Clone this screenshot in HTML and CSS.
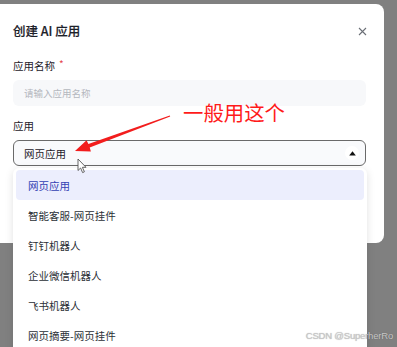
FILE: index.html
```html
<!DOCTYPE html>
<html lang="zh">
<head>
<meta charset="utf-8">
<link rel="stylesheet" href="styles.css">
</head>
<body>
<div class="stage">
  <div class="modal">
    <div class="modal-header">
      <span class="title">创建 AI 应用</span>
      <span class="close">
        <svg width="9" height="9" viewBox="0 0 9 9"><path d="M1 1L8 8M8 1L1 8" stroke="#6b6f76" stroke-width="1.1" fill="none"/></svg>
      </span>
    </div>
    <div class="form">
      <div class="field">
        <div class="label">应用名称<span class="req">*</span></div>
        <div class="input">请输入应用名称</div>
      </div>
      <div class="field">
        <div class="label">应用</div>
        <div class="select">
          <span>网页应用</span>
          <span class="caret"><svg width="7" height="5" viewBox="0 0 7 5"><path d="M3.5 0.3L6.8 4.5H0.2Z" fill="#111"/></svg></span>
        </div>
      </div>
    </div>
  </div>

  <ul class="dropdown">
    <li class="option active">网页应用</li>
    <li class="option">智能客服-网页挂件</li>
    <li class="option">钉钉机器人</li>
    <li class="option">企业微信机器人</li>
    <li class="option">飞书机器人</li>
    <li class="option">网页摘要-网页挂件</li>
  </ul>

  <div class="note">一般用这个</div>
  <svg class="arrow" width="397" height="347" viewBox="0 0 397 347">
    <polygon points="75,151 86.6,140.3 88.4,144.1 169.8,115.4 170.2,116.6 89.7,147.4 90.9,151.6" fill="#f21d1d"/>
  </svg>
  <svg class="cursor" width="12" height="16" viewBox="0 0 12 16">
    <path d="M1 1L1 12.5L3.6 10L5.6 14.6L7.4 13.8L5.4 9.3L9 9.3Z" fill="#fff" stroke="#555" stroke-width="0.9" stroke-linejoin="round"/>
  </svg>
  <div class="watermark">CSDN @SuperherRo</div>
</div>
</body>
</html>
```
FILE: styles.css
```css
html, body {
  margin: 0;
  padding: 0;
}
body {
  background: #808080;
  width: 397px;
  height: 347px;
  overflow: hidden;
  font-family: "Noto Sans CJK SC", "Noto Sans", sans-serif;
}
.stage {
  position: relative;
  width: 397px;
  height: 347px;
  padding-top: 4px;
  box-sizing: border-box;
}
.modal {
  width: 384px;
  height: 239px;
  background: #fff;
  border-radius: 0 8px 8px 0;
  box-sizing: border-box;
}
.modal-header {
  height: 54px;
  display: flex;
  align-items: center;
  justify-content: space-between;
  padding: 0 14px 0 13px;
}
.title {
  font-size: 12.5px;
  font-weight: 500;
  color: #1d2129;
  line-height: 16px;
  -webkit-text-stroke: 0.15px #1d2129;
}
.close {
  width: 16px;
  height: 16px;
  display: flex;
  align-items: center;
  justify-content: center;
}
.form {
  padding: 0 18px 0 13px;
}
.field {
  margin-bottom: 12px;
}
.label {
  font-size: 10.5px;
  line-height: 16px;
  color: #1d2129;
  margin-bottom: 6px;
}
.req {
  color: #e5484d;
  margin-left: 4px;
  font-size: 10px;
  position: relative;
  top: -2px;
}
.input {
  height: 26px;
  background: #f7f8fa;
  border-radius: 6px;
  display: flex;
  align-items: center;
  padding-left: 11px;
  font-size: 9.5px;
  color: #b4b7be;
}
.select {
  height: 26px;
  box-sizing: border-box;
  border: 1px solid #6a6a6a;
  border-radius: 6px;
  background: #f9fafc;
  display: flex;
  align-items: center;
  justify-content: space-between;
  padding: 0 6px 0 10px;
  font-size: 10.5px;
  color: #1d2129;
}
.caret {
  width: 14px;
  height: 14px;
  border-radius: 50%;
  background: #fff;
  display: flex;
  align-items: center;
  justify-content: center;
}
.dropdown {
  position: absolute;
  left: 13px;
  top: 168px;
  width: 354px;
  height: 190px;
  margin: 0;
  padding: 2px 3px 0;
  box-sizing: border-box;
  list-style: none;
  background: #fff;
  border-radius: 6px;
  box-shadow: 0 2px 8px rgba(0, 0, 0, 0.12);
}
.option {
  height: 30px;
  display: flex;
  align-items: center;
  padding-left: 12px;
  font-size: 10.5px;
  color: #2b2f36;
  border-radius: 4px;
}
.option.active {
  background: #eceefd;
  color: #3341b3;
}
.note {
  position: absolute;
  left: 183px;
  top: 98px;
  font-size: 20.4px;
  line-height: 28px;
  color: #ff1a1a;
  font-weight: 400;
}
.arrow {
  position: absolute;
  left: 0;
  top: 0;
}
.cursor {
  position: absolute;
  left: 77px;
  top: 158px;
}
.watermark {
  position: absolute;
  right: 4px;
  top: 329px;
  white-space: nowrap;
  font-family: "Liberation Sans", Arial, sans-serif;
  font-size: 9.5px;
  letter-spacing: -0.2px;
  line-height: 13px;
  color: #c8c8c8;
  text-shadow: 0 0 1px rgba(0, 0, 0, 0.3);
}
```
